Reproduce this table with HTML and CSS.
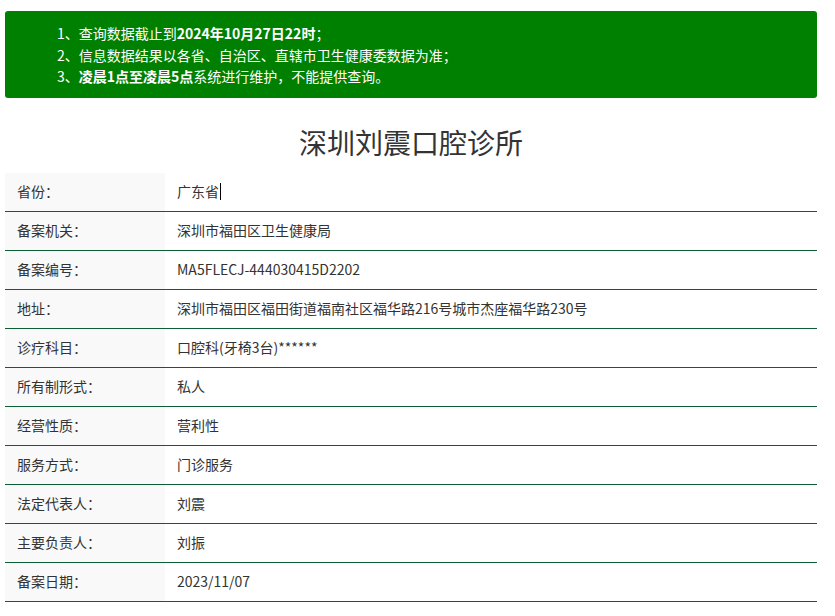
FILE: index.html
```html
<!DOCTYPE html>
<html lang="zh-CN">
<head>
<meta charset="utf-8">
<title>深圳刘震口腔诊所</title>
<link rel="stylesheet" href="styles.css">
</head>
<body>
<div class="page">
  <div class="notice">
    <ol class="notice-list">
      <li>1、查询数据截止到<b>2024年10月27日22时</b>；</li>
      <li>2、信息数据结果以各省、自治区、直辖市卫生健康委数据为准；</li>
      <li>3、<b>凌晨1点至凌晨5点</b>系统进行维护，不能提供查询。</li>
    </ol>
  </div>
  <h1 class="title">深圳刘震口腔诊所</h1>
  <div class="info">
    <div class="row"><div class="label">省份：</div><div class="value">广东省<span class="caret"></span></div></div>
    <div class="row"><div class="label">备案机关：</div><div class="value">深圳市福田区卫生健康局</div></div>
    <div class="row"><div class="label">备案编号：</div><div class="value">MA5FLECJ-444030415D2202</div></div>
    <div class="row"><div class="label">地址：</div><div class="value">深圳市福田区福田街道福南社区福华路216号城市杰座福华路230号</div></div>
    <div class="row"><div class="label">诊疗科目：</div><div class="value">口腔科(牙椅3台)******</div></div>
    <div class="row"><div class="label">所有制形式：</div><div class="value">私人</div></div>
    <div class="row"><div class="label">经营性质：</div><div class="value">营利性</div></div>
    <div class="row"><div class="label">服务方式：</div><div class="value">门诊服务</div></div>
    <div class="row"><div class="label">法定代表人：</div><div class="value">刘震</div></div>
    <div class="row"><div class="label">主要负责人：</div><div class="value">刘振</div></div>
    <div class="row"><div class="label">备案日期：</div><div class="value">2023/11/07</div></div>
  </div>
</div>
</body>
</html>
```
FILE: styles.css
```css
html, body {
  margin: 0;
  padding: 0;
  background: #fff;
}
body {
  font-family: "Noto Sans CJK SC", "Noto Sans", sans-serif;
  font-size: 14px;
  color: #333;
}
.page {
  width: 812px;
  margin-left: 5px;
  padding-top: 11px;
}
.notice {
  background: #008000;
  border-radius: 3px;
  color: #fff;
  padding: 12px 0 10px 52px;
  height: 65px;
}
.notice-list {
  list-style: none;
  margin: 0;
  padding: 0;
}
.notice-list li {
  line-height: 21.5px;
  height: 21.5px;
}
.notice-list b {
  font-weight: 700;
}
.title {
  margin: 0;
  text-align: center;
  font-size: 28px;
  font-weight: 400;
  color: #333;
  line-height: 40px;
  padding: 24px 0 11px;
}
.info {
  display: flex;
  flex-direction: column;
}
.row {
  display: flex;
  height: 38px;
  border-bottom: 1px solid #0d5e35;
}
.label {
  width: 160px;
  flex: none;
  background: #f9f9f9;
  box-sizing: border-box;
  padding: 0 0 2px 12px;
  display: flex;
  align-items: center;
}
.value {
  flex: 1;
  padding: 0 0 2px 12px;
  display: flex;
  align-items: center;
}
.caret {
  display: inline-block;
  width: 1px;
  height: 17px;
  background: #000;
  margin-left: 1px;
}
```
